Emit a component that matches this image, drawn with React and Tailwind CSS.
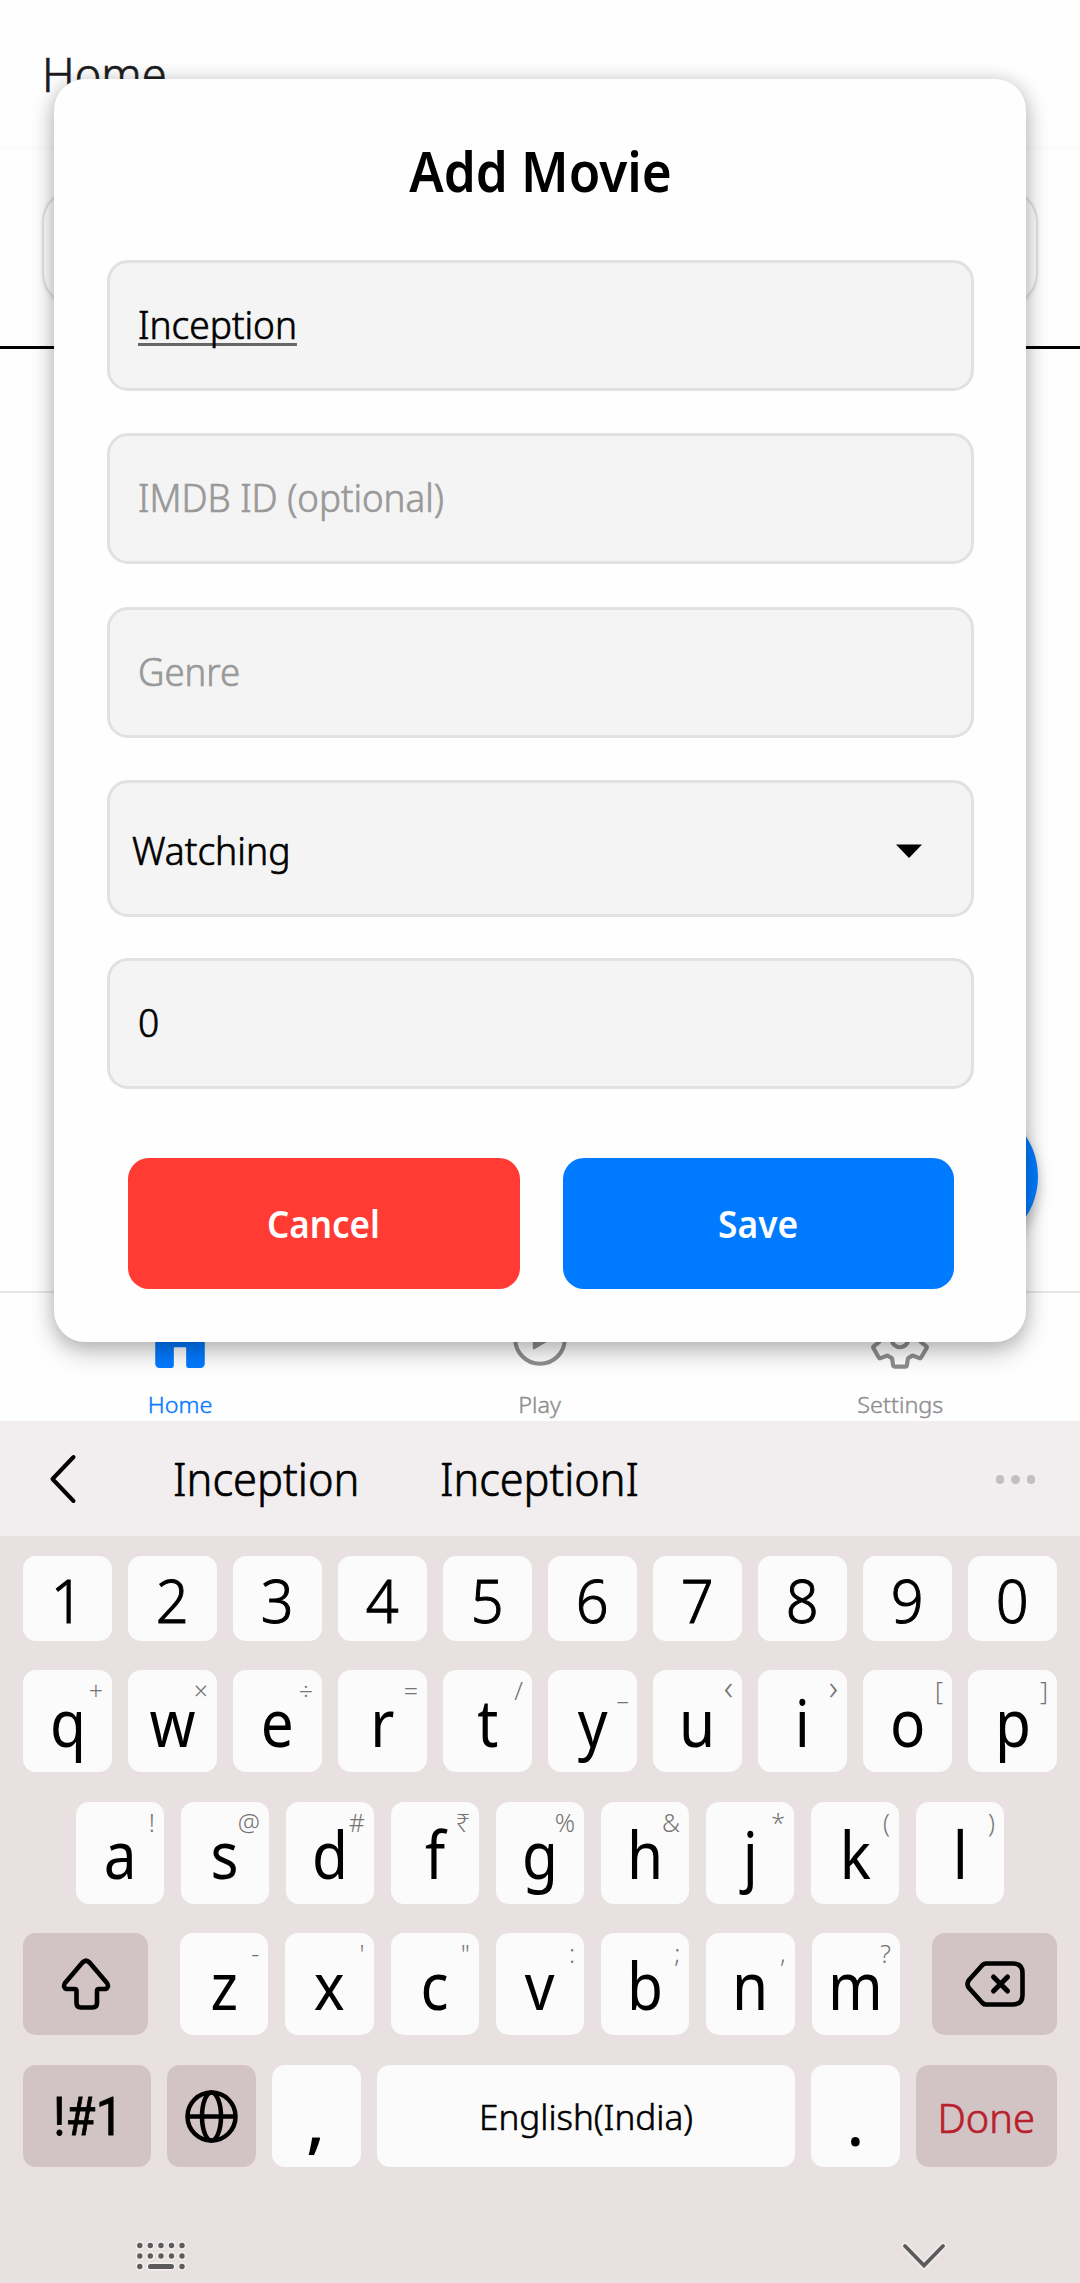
import React from "react";
import { IoHome, IoPlayCircleOutline, IoSettingsOutline } from "react-icons/io5";

const numberRow = ["1", "2", "3", "4", "5", "6", "7", "8", "9", "0"];
const topRow = [["q", "+"], ["w", "×"], ["e", "÷"], ["r", "="], ["t", "/"], ["y", "_"], ["u", "‹"], ["i", "›"], ["o", "["], ["p", "]"]];
const homeRow = [["a", "!"], ["s", "@"], ["d", "#"], ["f", "₹"], ["g", "%"], ["h", "&"], ["j", "*"], ["k", "("], ["l", ")"]];
const bottomRow = [["z", "-"], ["x", "'"], ["c", '"'], ["v", ":"], ["b", ";"], ["n", ","], ["m", "?"]];

function Key({ label, hint }) {
  const angle = hint === "‹" || hint === "›";
  return (
    <div className="relative flex h-full min-w-0 flex-1 items-center justify-center rounded-[13px] bg-[#fbfbfb] text-[65px] leading-none text-black">
      <span className="translate-y-px scale-x-[0.9]">{label}</span>
      <span className={"absolute right-[9px] leading-[26px] font-light text-[#757575] " + (angle ? "top-[4px] text-[35px]" : "top-[7px] text-[25px]")}>
        {hint}
      </span>
    </div>
  );
}

function DarkKey({ className, children }) {
  return (
    <div className={"flex h-full shrink-0 items-center justify-center rounded-[13px] bg-[#d2c3c4] text-black " + className}>
      {children}
    </div>
  );
}

function Field({ className = "", children }) {
  return (
    <div className={"flex h-[131px] items-center rounded-[21px] border-[3px] border-[#e1e1e1] bg-[#f4f4f4] pl-[28px] text-[38px] leading-none font-light [-webkit-text-stroke:0.7px] " + className}>
      {children}
    </div>
  );
}

function Tab({ icon: Icon, label, className }) {
  return (
    <div className={"flex flex-1 flex-col items-center pt-[13px] " + className}>
      <Icon className="size-[66px]" />
      <span className="mt-[21px] scale-x-[1.04] text-[22.5px] leading-[24px] font-light [-webkit-text-stroke:0.4px]">{label}</span>
    </div>
  );
}

function Screen() {
  return (
    <div className="flex h-[1421px] flex-col bg-[#fefefe]">
      <div className="flex h-[148px] border-b border-[#f8f8f8] pt-[51px] pl-[42px] shadow-[0_2px_4px_rgba(0,0,0,0.015)]">
        <span className="origin-left scale-x-[0.94] text-[48px] leading-[46px] font-light text-[#1c1c1e] [-webkit-text-stroke:0.7px]">Home</span>
      </div>
      <div className="h-[198px] px-[42px] pt-[41px]">
        <div className="h-[117px] rounded-[33px] border-2 border-[#e0e0e6] bg-[#fdfdfd] shadow-[0_2px_4px_rgba(0,0,0,0.07)]" />
      </div>
      <div className="h-[3px] bg-black" />
      <div className="flex flex-1 items-end justify-end pr-[42px] pb-[41px]">
        <div className="size-[147px] rounded-full bg-[#007bff] shadow-[0_8px_14px_rgba(0,0,0,0.25)]" />
      </div>
      <div className="flex h-[130px] border-t-2 border-[#e6e6e6]">
        <Tab icon={IoHome} label="Home" className="text-[#007aff]" />
        <Tab icon={IoPlayCircleOutline} label="Play" className="text-[#8e8e8f]" />
        <Tab icon={IoSettingsOutline} label="Settings" className="text-[#8e8e8f]" />
      </div>
    </div>
  );
}

function Dialog() {
  return (
    <div className="absolute top-[79px] left-[54px] flex h-[1263px] w-[972px] flex-col rounded-[31px] bg-[#fefefe] pr-[52px] pl-[53px] shadow-[0_10px_24px_rgba(0,0,0,0.25),0_0_18px_rgba(0,0,0,0.13)]">
      <h1 className="mt-[61px] h-[60px] text-center text-[56px] leading-[60px] font-semibold text-black">
        <span className="inline-block scale-x-[0.915]">Add Movie</span>
      </h1>
      <div className="mt-[60px] flex flex-col gap-[42px]">
        <Field className="text-black">
          <span className="origin-left scale-x-[0.975] border-b-[3px] border-[#666] leading-[38px]">Inception</span>
        </Field>
        <Field className="text-[#999]">
          <span className="origin-left -translate-y-[2px] scale-x-[0.965]">IMDB ID (optional)</span>
        </Field>
        <Field className="mt-px text-[#999]">
          <span className="origin-left -translate-y-[2px] scale-x-[0.96]">Genre</span>
        </Field>
        <div className="flex h-[137px] items-center justify-between rounded-[21px] border-[3px] border-[#e1e1e1] bg-[#f4f4f4] pr-[49px] pl-[22px] text-[38px] leading-none font-light text-black [-webkit-text-stroke:0.7px]">
          <span className="origin-left translate-y-[1px] scale-x-[0.98]">Watching</span>
          <svg className="h-[14px] w-[26px] translate-y-[2px]" viewBox="0 0 26 14"><path d="M0 0.5H26L13 14Z" fill="#000" /></svg>
        </div>
        <Field className="-mt-px text-black">
          <span className="origin-left -translate-y-[2px] scale-x-[0.98]">0</span>
        </Field>
      </div>
      <div className="mt-[69px] flex gap-[43px] pr-[20px] pl-[21px] text-[38px] leading-none font-semibold text-white">
        <button className="flex h-[131px] flex-1 items-center justify-center rounded-[21px] bg-[#ff3b33]">
          <span className="-translate-y-px scale-x-[0.92]">Cancel</span>
        </button>
        <button className="flex h-[131px] flex-1 items-center justify-center rounded-[21px] bg-[#007bff]">
          <span className="-translate-y-px scale-x-[0.93]">Save</span>
        </button>
      </div>
    </div>
  );
}

function Suggestions() {
  return (
    <div className="flex h-[115px] items-center bg-[#f2eeef] pr-[45px] pl-[49px] text-[45px] leading-none font-light text-black [-webkit-text-stroke:0.7px]">
      <svg className="h-[50px] w-[28px]" viewBox="0 0 28 50" fill="none" stroke="#000" strokeWidth="4" strokeLinecap="round" strokeLinejoin="round">
        <path d="M24.5 3 3.5 25 24.5 47" />
      </svg>
      <span className="ml-[96px] w-[267px] origin-left scale-x-[0.965]">Inception</span>
      <span className="origin-left scale-x-[0.96]">InceptionI</span>
      <div className="ml-auto flex translate-y-px gap-[7px]">
        <i className="size-[8.5px] rounded-full bg-[#c3bfc0]" />
        <i className="size-[8.5px] rounded-full bg-[#c3bfc0]" />
        <i className="size-[8.5px] rounded-full bg-[#c3bfc0]" />
      </div>
    </div>
  );
}

function Keyboard() {
  return (
    <div className="h-[747px] bg-[#e8e0e1] px-[23px] pt-[20px]">
      <div className="flex h-[85px] gap-[16px]">
        {numberRow.map((n) => (
          <div key={n} className="flex flex-1 items-center justify-center rounded-[13px] bg-[#fbfbfb] text-[60px] leading-none font-light text-black [-webkit-text-stroke:1px]">
            <span className="translate-y-px scale-x-[0.96]">{n}</span>
          </div>
        ))}
      </div>
      <div className="mt-[29px] flex h-[102px] gap-[16px]">
        {topRow.map(([l, h]) => <Key key={l} label={l} hint={h} />)}
      </div>
      <div className="mt-[30px] flex h-[102px] gap-[17px] px-[53px]">
        {homeRow.map(([l, h]) => <Key key={l} label={l} hint={h} />)}
      </div>
      <div className="mt-[29px] flex h-[102px]">
        <DarkKey className="w-[125px]">
          <svg className="h-[52px] w-[50px]" viewBox="0 0 50 52" fill="none" stroke="#000" strokeWidth="4.6" strokeLinejoin="round">
            <path d="M21.5 4.5Q25 1 28.5 4.5L46 25Q48.500 29.500 44.500 31H38Q36 31 36 33V45Q36 49.500 31.500 49.500H20Q15.500 49.500 15.500 45V33Q15.500 31 13.500 31H5.500Q1.500 29.500 4 25Z" />
          </svg>
        </DarkKey>
        <div className="mx-[32px] flex flex-1 gap-[17px]">
          {bottomRow.map(([l, h]) => <Key key={l} label={l} hint={h} />)}
        </div>
        <DarkKey className="w-[125px]">
          <svg className="h-[46px] w-[60px]" viewBox="0 0 60 46" fill="none" stroke="#000" strokeWidth="4.6" strokeLinecap="round" strokeLinejoin="round">
            <path d="M21 2.500H48Q57.500 2.500 57.500 12V34Q57.500 43.500 48 43.500H21Q19 43.500 17.500 42L4 27Q1 23 4 19L17.500 4Q19 2.500 21 2.500Z" />
            <path d="M28.500 16 42.500 30M42.500 16 28.500 30" strokeWidth="5" />
          </svg>
        </DarkKey>
      </div>
      <div className="mt-[30px] flex h-[102px] gap-[16px]">
        <DarkKey className="w-[128px] font-['Roboto',sans-serif] text-[53px] leading-none font-normal [-webkit-text-stroke:0.8px]">
          <span className="translate-x-px translate-y-px scale-x-[0.92]">!#1</span>
        </DarkKey>
        <DarkKey className="w-[89px]">
          <svg className="size-[53px]" viewBox="0 0 53 53" fill="none" stroke="#000" strokeWidth="4.500">
            <circle cx="26.500" cy="26.500" r="24" />
            <ellipse cx="26.500" cy="26.500" rx="9.500" ry="24" />
            <path d="M2.500 26.500H50.500" />
          </svg>
        </DarkKey>
        <div className="flex w-[89px] shrink-0 items-center justify-center rounded-[13px] bg-[#fbfbfb] text-[70px] leading-none text-black">
          <span className="-translate-x-px translate-y-[3px] font-medium">,</span>
        </div>
        <div className="flex flex-1 items-center justify-center rounded-[13px] bg-[#fbfbfb] text-[35px] leading-none font-light text-black [-webkit-text-stroke:0.6px]">
          <span>English(India)</span>
        </div>
        <div className="flex w-[89px] shrink-0 items-center justify-center rounded-[13px] bg-[#fbfbfb] text-[70px] leading-none text-black">
          <span className="translate-y-[3px]">.</span>
        </div>
        <DarkKey className="w-[141px] text-[41px] leading-none font-light [-webkit-text-stroke:0.7px]">
          <span className="translate-y-px scale-x-[0.97] text-[#b8202c]">Done</span>
        </DarkKey>
      </div>
      <div className="mt-[70px] flex justify-between pr-[108px] pl-[110px]">
        <svg className="h-[40px] w-[56px]" viewBox="0 0 56 40" fill="#5c5a5a" stroke="#f3efef" strokeWidth="3" paintOrder="stroke">
          {[8.500, 19].map((y) => [6.800, 17.300, 28, 38.500, 49].map((x) => <circle key={x + "-" + y} cx={x} cy={y} r="2.700" />))}
          <circle cx="6.800" cy="29.500" r="2.700" />
          <rect x="15" y="26.900" width="26" height="5.200" rx="2.600" />
          <circle cx="49" cy="29.500" r="2.700" />
        </svg>
        <svg className="h-[36px] w-[50px]" viewBox="0 0 50 36" fill="none" strokeLinecap="round">
          <path d="M6 9 25 28.500 44 9" stroke="#f1ecec" strokeWidth="7" />
          <path d="M6 9 25 28.500 44 9" stroke="#5c5a5a" strokeWidth="3.800" />
        </svg>
      </div>
    </div>
  );
}

export default function App() {
  return (
    <div className="relative h-[2283px] w-[1080px] overflow-hidden font-['Noto_Sans',sans-serif]">
      <Screen />
      <Suggestions />
      <Keyboard />
      <Dialog />
    </div>
  );
}
